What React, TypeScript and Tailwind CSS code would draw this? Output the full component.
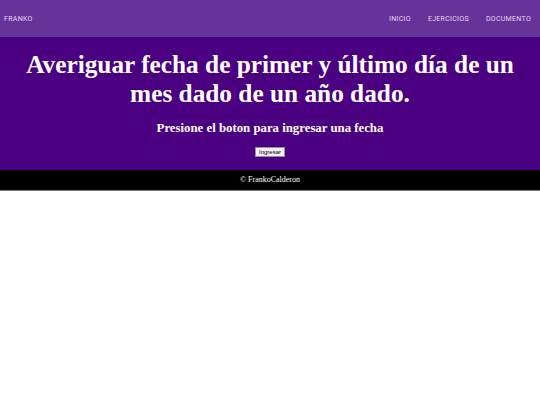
export default function App() {
  return (
    <div className="min-h-[405px] bg-white">
      <header className="flex h-[37px] items-center justify-between bg-[#663399] px-1 font-['Roboto',sans-serif] text-[7px] tracking-[0.3px] text-[#e4d6f2]">
        <a href="#" className="pt-[1px]">FRANKO</a>
        <nav className="flex items-center gap-[17px] pr-[5px] pt-[1px]">
          <a href="#">INICIO</a>
          <a href="#">EJERCICIOS</a>
          <a href="#">DOCUMENTO</a>
        </nav>
      </header>
      <main className="flex flex-col items-center bg-[#4b0082] px-4 pb-[13px] pt-[13px] text-center font-['Liberation_Serif',serif] text-white">
        <h1 className="text-[25.3px] font-bold leading-[29px]">
          Averiguar fecha de primer y último día de un mes dado de un año dado.
        </h1>
        <h2 className="mt-[12px] text-[12.8px] font-bold leading-[16px]">
          Presione el boton para ingresar una fecha
        </h2>
        <button className="mt-[11px] border border-[#9a8aa8] bg-[#f3f0f5] px-[3px] font-['Liberation_Sans',sans-serif] text-[6px] leading-[8px] text-black">
          Ingresar
        </button>
      </main>
      <footer className="flex h-[21px] items-center justify-center border-b border-[#777] bg-black font-['Liberation_Serif',serif] text-[8px] text-white">
        © FrankoCalderon
      </footer>
    </div>
  );
}
